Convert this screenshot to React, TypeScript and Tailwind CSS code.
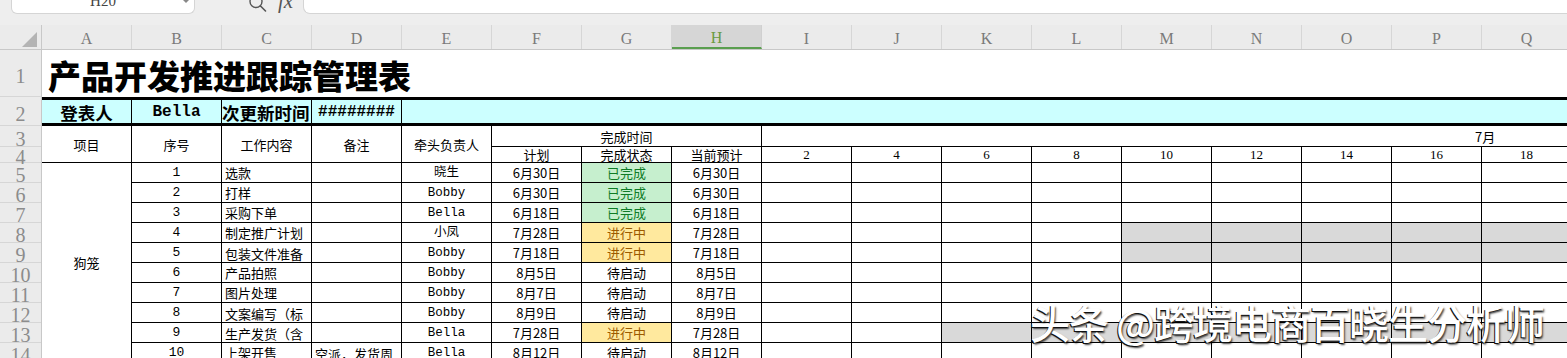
import React from "react";

const CJK = "font-['Noto_Sans_CJK_SC',sans-serif]";
const MONO = "font-['Liberation_Mono','Noto_Sans_CJK_SC',monospace]";
const SERIF = "font-['Liberation_Serif','Noto_Sans_CJK_SC',serif]";

const COLS = ["A", "B", "C", "D", "E", "F", "G", "H", "I", "J", "K", "L", "M", "N", "O", "P", "Q"];
const DAYS = [2, 4, 6, 8, 10, 12, 14, 16, 18];
const ROW_HEIGHTS = ["h-[47px]", "h-[29px]", "h-[21px]", "h-[16px]", ...Array(10).fill("h-[20px]")];

type Status = "done" | "doing" | "todo";

type Row = {
  no: number;
  task: string;
  note?: string;
  owner: string;
  plan: string;
  status: Status;
  est: string;
  wrap?: boolean;
  grayFrom?: number;
};

const ROWS: Row[] = [
  { no: 1, task: "选款", owner: "晓生", plan: "6月30日", status: "done", est: "6月30日" },
  { no: 2, task: "打样", owner: "Bobby", plan: "6月30日", status: "done", est: "6月30日" },
  { no: 3, task: "采购下单", owner: "Bella", plan: "6月18日", status: "done", est: "6月18日" },
  { no: 4, task: "制定推广计划", owner: "小凤", plan: "7月28日", status: "doing", est: "7月28日", grayFrom: 4 },
  { no: 5, task: "包装文件准备（说明书）", owner: "Bobby", plan: "7月18日", status: "doing", est: "7月18日", wrap: true, grayFrom: 4 },
  { no: 6, task: "产品拍照", owner: "Bobby", plan: "8月5日", status: "todo", est: "8月5日" },
  { no: 7, task: "图片处理", owner: "Bobby", plan: "8月7日", status: "todo", est: "8月7日" },
  { no: 8, task: "文案编写（标题、描述）", owner: "Bobby", plan: "8月9日", status: "todo", est: "8月9日", wrap: true },
  { no: 9, task: "生产发货（含质检）", owner: "Bella", plan: "7月28日", status: "doing", est: "7月28日", wrap: true, grayFrom: 2 },
  { no: 10, task: "上架开售", note: "空派，发货周期", owner: "Bella", plan: "8月12日", status: "todo", est: "8月12日" },
];

const STATUS: Record<Status, { label: string; cls: string }> = {
  done: { label: "已完成", cls: "bg-[#c6efce] text-[#0f7b26]" },
  doing: { label: "进行中", cls: "bg-[#ffe99e] text-[#9c5a00]" },
  todo: { label: "待启动", cls: "text-black" },
};

// base cell: 90px column with its right grid line
const cell = "w-[90px] shrink-0 h-full border-r border-black flex overflow-hidden";
const bottomText = "items-end justify-center pb-[1px] leading-[16px] whitespace-nowrap";
const wrapText = "items-start pt-[3px] leading-[15px] whitespace-normal break-all";

function Toolbar() {
  return (
    <div className="h-[25px] bg-[#eeeeee] flex items-start pl-[11px]">
      <div className="w-[184px] h-[14px] bg-white border border-t-0 border-[#d5d5d5] rounded-b-[6px] overflow-hidden relative">
        <div className={`-mt-[9px] text-center leading-[20px] text-[15px] text-[#444] ${SERIF}`}>H20</div>
        <svg className="absolute right-[5px] top-0" width="6" height="4" viewBox="0 0 6 4">
          <path d="M0 0 L6 0 L3 3 Z" fill="#888" />
        </svg>
      </div>
      <svg className="ml-[53px] shrink-0" width="22" height="14" viewBox="0 0 22 14">
        <circle cx="8" cy="1.5" r="6" fill="none" stroke="#555" strokeWidth="1.4" />
        <path d="M12.5 6 L17.5 11" stroke="#555" strokeWidth="1.6" strokeLinecap="round" />
      </svg>
      <div className={`ml-[8px] -mt-[9px] italic text-[21px] leading-[20px] text-[#555] ${SERIF}`}>fx</div>
      <div className="ml-[10px] flex-1 h-[14px] bg-white border border-t-0 border-r-0 border-[#d5d5d5] rounded-bl-[7px]" />
    </div>
  );
}

function ColumnHeaders() {
  return (
    <div className="h-[25px] flex bg-[#ebebeb] border-b border-[#c8c8c8] overflow-hidden">
      <div className="w-[42px] shrink-0 h-full border-r border-[#c8c8c8]">
        <svg width="42" height="25" viewBox="0 0 42 25">
          <path d="M37 7 L37 22 L22 22 Z" fill="#b4b4b4" />
        </svg>
      </div>
      {COLS.map((c) =>
        c === "H" ? (
          <div
            key={c}
            className={`w-[90px] shrink-0 h-full flex items-center justify-center pt-[3px] bg-[#d6d6d6] border-b-2 border-[#5a9e4f] border-r border-r-[#d0d0d0] text-[16px] text-[#6a9a43] ${SERIF}`}
          >
            {c}
          </div>
        ) : (
          <div
            key={c}
            className={`w-[90px] shrink-0 h-full flex items-center justify-center pt-[3px] border-r border-[#d6d6d6] text-[16px] text-[#7a7a7a] ${SERIF}`}
          >
            {c}
          </div>
        )
      )}
    </div>
  );
}

function RowHeaders() {
  return (
    <div className="w-[42px] shrink-0 bg-[#ebebeb] border-r border-[#c8c8c8] flex flex-col">
      {ROW_HEIGHTS.map((h, i) => (
        <div
          key={i}
          className={`${h} shrink-0 border-b border-[#d6d6d6] flex items-center justify-center pt-[5px] leading-none text-[20px] text-[#8c8c8c] ${SERIF}`}
        >
          {i + 1}
        </div>
      ))}
    </div>
  );
}

function DataRow({ r }: { r: Row }) {
  const st = STATUS[r.status];
  return (
    <div className="h-[20px] shrink-0 flex border-b border-black">
      <div className={`${cell} ${bottomText} text-[13px] ${MONO}`}>{r.no}</div>
      <div className={`${cell} px-[3px] text-[13px] ${r.wrap ? wrapText : "items-end pb-[1px] leading-[16px] whitespace-nowrap"}`}>
        {r.task}
      </div>
      <div className={`${cell} px-[3px] text-[13px] ${wrapText}`}>{r.note ?? ""}</div>
      <div className={`${cell} ${bottomText} text-[12.5px] ${MONO}`}>{r.owner}</div>
      <div className={`${cell} ${bottomText} text-[13px]`}>{r.plan}</div>
      <div className={`${cell} ${bottomText} text-[13px] ${st.cls}`}>{st.label}</div>
      <div className={`${cell} ${bottomText} text-[13px]`}>{r.est}</div>
      {DAYS.map((d, i) => (
        <div key={d} className={`${cell} ${r.grayFrom !== undefined && i >= r.grayFrom ? "bg-[#d9d9d9]" : ""}`} />
      ))}
    </div>
  );
}

function Sheet() {
  return (
    <div className="flex-1 overflow-hidden flex flex-col text-black">
      {/* row 1: title */}
      <div className="h-[47px] shrink-0 flex items-end pl-[6px] pb-[2px]">
        <span className="text-[33px] font-black leading-[40px] whitespace-nowrap">产品开发推进跟踪管理表</span>
      </div>

      {/* row 2 */}
      <div className="w-[1530px] h-[29px] shrink-0 flex border-y-[3px] border-black bg-[#ccffff]">
        <div className={`${cell} items-end justify-center text-[17.5px] font-bold leading-[20px] whitespace-nowrap`}>登表人</div>
        <div className={`${cell} items-end justify-center pb-[1px] text-[16px] font-bold leading-[20px] whitespace-nowrap ${MONO}`}>Bella</div>
        <div className={`${cell} items-end text-[17.5px] font-bold leading-[20px] whitespace-nowrap`}>次更新时间</div>
        <div className={`${cell} items-end justify-center pb-[1px] text-[16px] font-bold leading-[20px] whitespace-nowrap ${MONO}`}>########</div>
      </div>

      {/* rows 3-4: headers */}
      <div className="w-[1530px] h-[37px] shrink-0 flex border-b border-black text-[13px] whitespace-nowrap">
        {["项目", "序号", "工作内容", "备注", "牵头负责人"].map((t) => (
          <div key={t} className={`${cell} items-center justify-center pt-[2px]`}>
            {t}
          </div>
        ))}
        <div className="w-[270px] shrink-0 h-full border-r border-black flex flex-col">
          <div className="h-[21px] shrink-0 border-b border-black flex items-center justify-center pt-[1px]">完成时间</div>
          <div className="flex-1 flex">
            <div className={`${cell} items-end justify-center leading-[15px]`}>计划</div>
            <div className={`${cell} items-end justify-center leading-[15px]`}>完成状态</div>
            <div className="w-[89px] shrink-0 h-full flex items-end justify-center leading-[15px]">当前预计</div>
          </div>
        </div>
        <div className="w-[810px] shrink-0 h-full flex flex-col">
          <div className="h-[21px] shrink-0 border-b border-black flex items-center pl-[713px] pt-[1px]">7月</div>
          <div className="flex-1 flex">
            {DAYS.map((d) => (
              <div key={d} className={`${cell} items-end justify-center leading-[15px] text-[13px] ${SERIF}`}>
                {d}
              </div>
            ))}
          </div>
        </div>
      </div>

      {/* rows 5-14 */}
      <div className="w-[1530px] h-[200px] shrink-0 flex text-[13px]">
        <div className={`${cell} items-center justify-center`}>狗笼</div>
        <div className="flex flex-col">
          {ROWS.map((r) => (
            <DataRow key={r.no} r={r} />
          ))}
        </div>
      </div>
    </div>
  );
}

export default function App() {
  return (
    <div className={`w-[1567px] h-[358px] overflow-hidden bg-white relative ${CJK}`}>
      <Toolbar />
      <ColumnHeaders />
      <div className="flex">
        <RowHeaders />
        <Sheet />
      </div>
      <div className="absolute left-[1030px] top-[302px] text-white text-[40px] font-medium leading-none tracking-[-1px] whitespace-nowrap [text-shadow:-1px_1px_0_#111,1px_2px_2px_rgba(0,0,0,0.75)]">
        头条 @跨境电商百晓生分析师
      </div>
    </div>
  );
}
